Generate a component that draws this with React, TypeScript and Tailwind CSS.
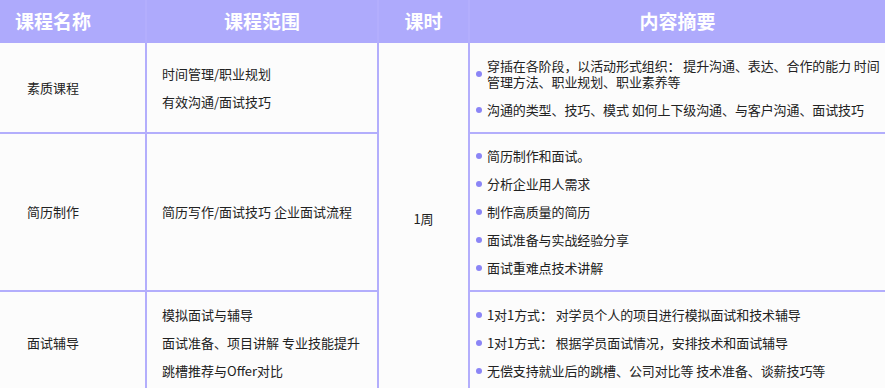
import React from 'react';

const rows = [
  {
    name: '素质课程',
    scope: ['时间管理/职业规划', '有效沟通/面试技巧'],
    summary: [
      '穿插在各阶段，以活动形式组织： 提升沟通、表达、合作的能力 时间管理方法、职业规划、职业素养等',
      '沟通的类型、技巧、模式 如何上下级沟通、与客户沟通、面试技巧',
    ],
    h: 'h-[89px]',
  },
  {
    name: '简历制作',
    scope: ['简历写作/面试技巧 企业面试流程'],
    summary: ['简历制作和面试。', '分析企业用人需求', '制作高质量的简历', '面试准备与实战经验分享', '面试重难点技术讲解'],
    h: 'h-[158px]',
  },
  {
    name: '面试辅导',
    scope: ['模拟面试与辅导', '面试准备、项目讲解 专业技能提升', '跳槽推荐与Offer对比'],
    summary: [
      '1对1方式： 对学员个人的项目进行模拟面试和技术辅导',
      '1对1方式： 根据学员面试情况，安排技术和面试辅导',
      '无偿支持就业后的跳槽、公司对比等 技术准备、谈薪技巧等',
    ],
    h: 'h-[104px]',
  },
];

const App: React.FC = () => {
  return (
    <div className="w-[885px] bg-white font-['Noto_Sans_CJK_SC','Noto_Sans',sans-serif] text-[13px] text-[#222]">
      {/* Header */}
      <div className="grid grid-cols-[145px_232px_91px_417px] h-[43px] bg-[#aeaafc] text-white font-bold text-[19px]">
        <div className="flex items-center pl-[15px]">课程名称</div>
        <div className="flex items-center justify-center border-l-2 border-[#b3aefd]">课程范围</div>
        <div className="flex items-center justify-center border-l-2 border-[#b3aefd]">课时</div>
        <div className="flex items-center justify-center border-l-2 border-[#b3aefd]">内容摘要</div>
      </div>

      {/* Body */}
      <div className="grid grid-cols-[145px_232px_91px_417px] bg-[#fcfcfc]">
        {rows.map((r, i) => (
          <React.Fragment key={r.name}>
            <div
              className={`flex items-center pl-[27px] ${r.h} ${i > 0 ? 'border-t-2 border-[#b3aefc]' : ''}`}
              style={{ gridColumn: 1, gridRow: i + 1 }}
            >
              {r.name}
            </div>
            <div
              className={`flex flex-col justify-center pl-[15px] border-l-2 border-[#b3aefc] leading-[28px] ${i > 0 ? 'border-t-2' : ''}`}
              style={{ gridColumn: 2, gridRow: i + 1 }}
            >
              {r.scope.map(s => (
                <div key={s}>{s}</div>
              ))}
            </div>
            <div
              className={`flex flex-col justify-center gap-[12px] pl-[6px] pr-0 border-l-2 border-[#b3aefc] ${i > 0 ? 'border-t-2' : ''}`}
              style={{ gridColumn: 4, gridRow: i + 1 }}
            >
              {r.summary.map(s => (
                <div key={s} className="flex items-center gap-[5px]">
                  <span className="w-[6px] h-[6px] shrink-0 rounded-full bg-[#8b85f6]"></span>
                  <span className="leading-[16px] tracking-[-0.1px]">{s}</span>
                </div>
              ))}
            </div>
          </React.Fragment>
        ))}
        <div
          className="flex items-center justify-center border-l-2 border-[#b3aefc]"
          style={{ gridColumn: 3, gridRow: '1 / span 3' }}
        >
          1周
        </div>
      </div>
    </div>
  );
};

export default App;
